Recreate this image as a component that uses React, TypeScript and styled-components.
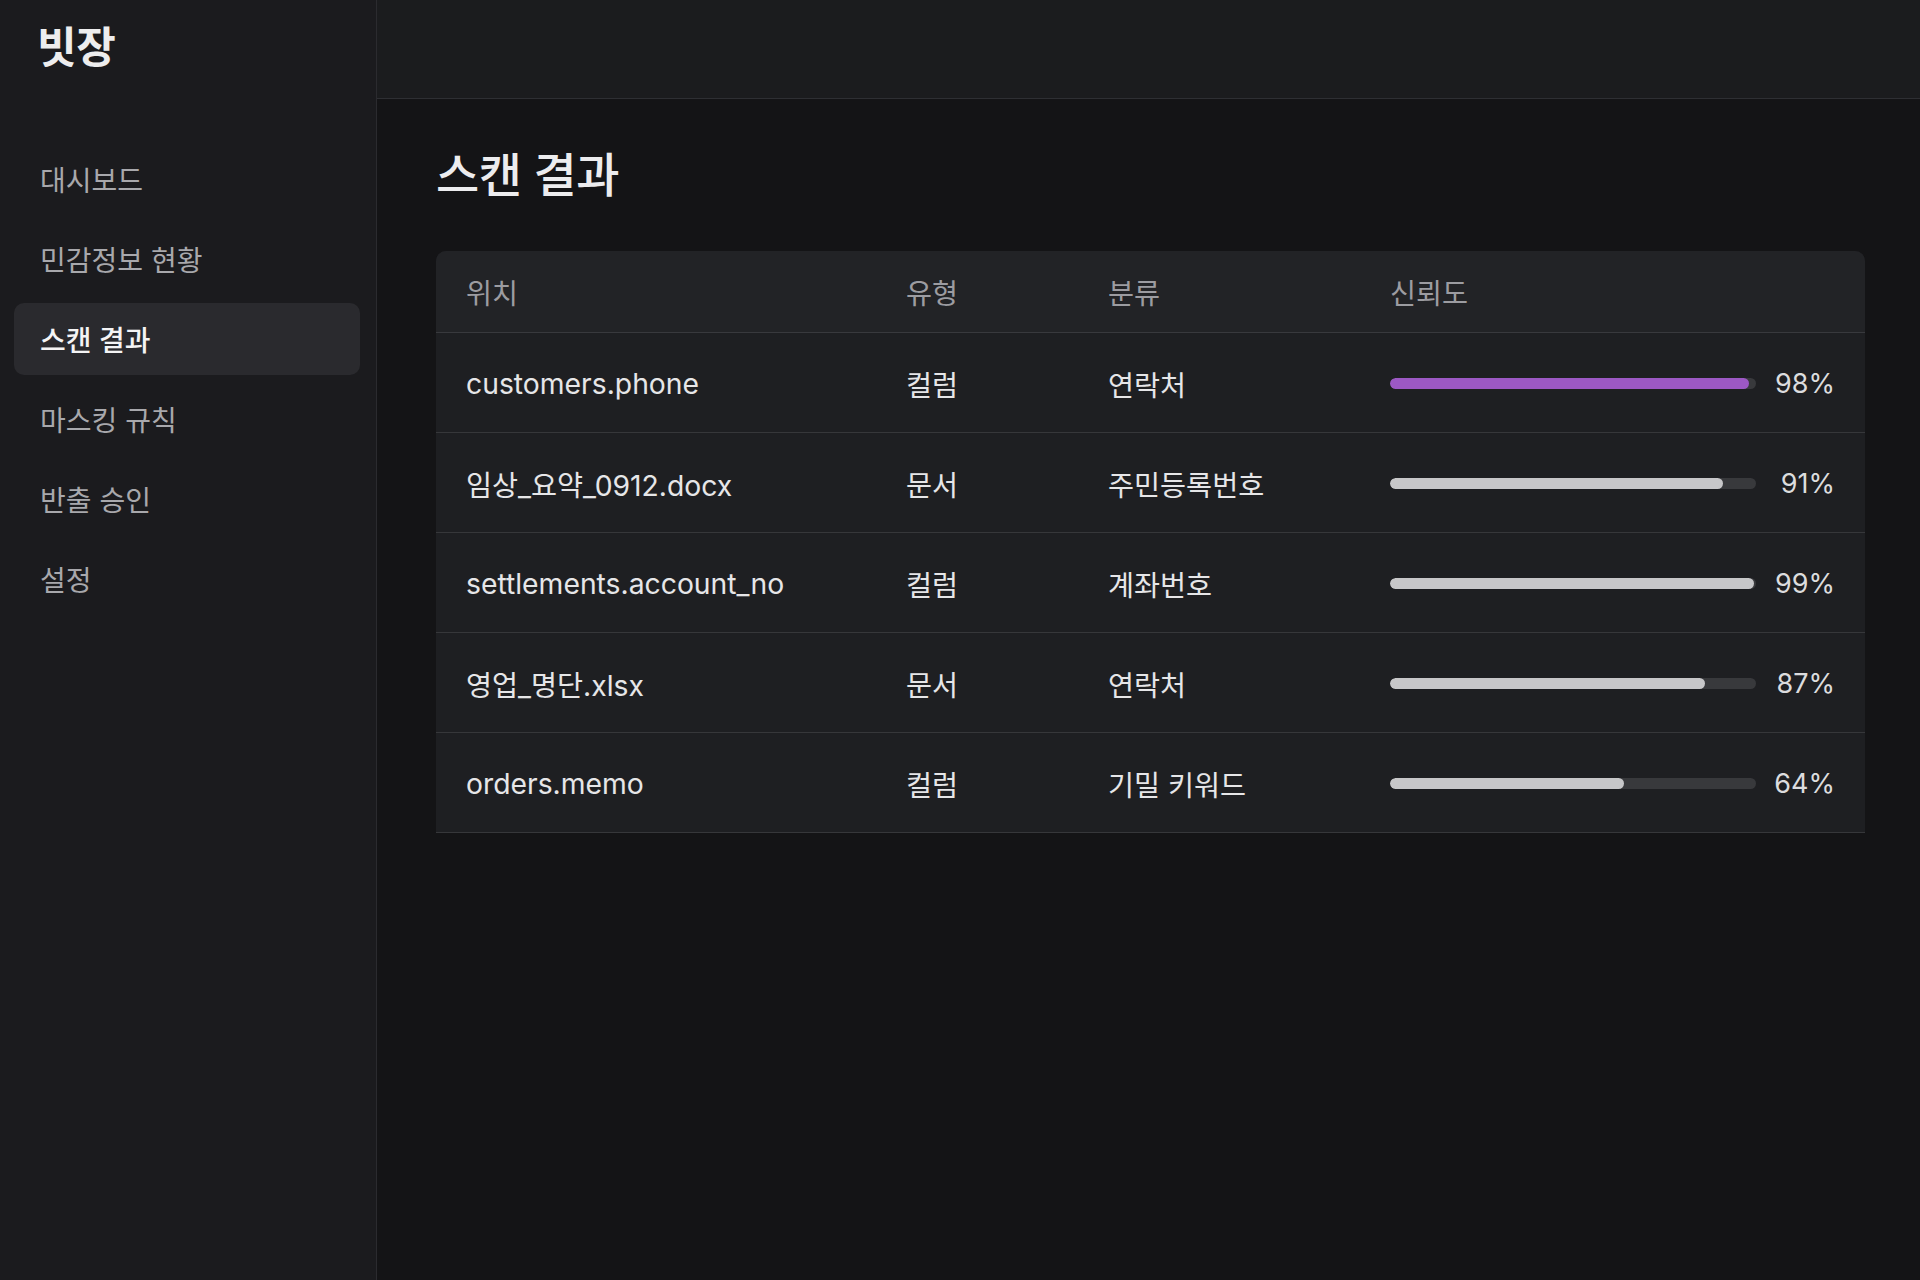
import styled, { createGlobalStyle } from 'styled-components';

const GlobalStyles = createGlobalStyle`
  html, body {
    margin: 0;
    padding: 0;
    background: #141416;
  }
  body {
    font-family: 'Inter', 'Noto Sans CJK KR', sans-serif;
    color: #e8e8ea;
    -webkit-font-smoothing: antialiased;
  }
  * {
    box-sizing: border-box;
  }
`;

const Shell = styled.div`
  display: grid;
  grid-template-columns: 377px 1fr;
  min-height: 100vh;
`;

const Sidebar = styled.aside`
  background: #1b1b1e;
  border-right: 1px solid #2b2b2f;
  padding: 22px 16px 0 14px;
  display: flex;
  flex-direction: column;
`;

const Logo = styled.div`
  margin-left: 23px;
  font-size: 43px;
  line-height: 50px;
  font-weight: 700;
  color: #ededee;
  letter-spacing: -0.01em;
`;

const Nav = styled.nav`
  margin-top: 71px;
  display: flex;
  flex-direction: column;
  gap: 8px;
`;

const NavItem = styled.a<{ $active?: boolean }>`
  display: flex;
  align-items: center;
  height: 72px;
  padding: 0 26px;
  border-radius: 10px;
  font-size: 28px;
  color: ${(p) => (p.$active ? '#f4f4f5' : '#a8a8ac')};
  background: ${(p) => (p.$active ? '#2a2a2e' : 'transparent')};
  font-weight: ${(p) => (p.$active ? 500 : 400)};
  cursor: pointer;
`;

const Main = styled.main`
  display: flex;
  flex-direction: column;
  background: #141416;
`;

const TopBar = styled.header`
  height: 99px;
  flex-shrink: 0;
  background: #1b1c1e;
  border-bottom: 1px solid #2e2f33;
`;

const Content = styled.section`
  padding: 49px 55px 0 59px;
`;

const Title = styled.h1`
  margin: 0;
  font-size: 47px;
  line-height: 54px;
  font-weight: 500;
  color: #ececee;
  letter-spacing: -0.01em;
`;

const Table = styled.div`
  margin-top: 49px;
  background: #1e1f22;
  border-radius: 10px 10px 0 0;
  overflow: hidden;
`;

const Row = styled.div<{ $head?: boolean }>`
  display: grid;
  grid-template-columns: 440px 202px 282px 1fr;
  align-items: center;
  height: ${(p) => (p.$head ? '82px' : '100px')};
  padding: ${(p) => (p.$head ? '0 30px' : '2px 30px 0')};
  border-bottom: 1px solid ${(p) => (p.$head ? '#38393d' : '#36373a')};
  background: ${(p) => (p.$head ? '#222326' : 'transparent')};
  font-size: 28.3px;
  color: ${(p) => (p.$head ? '#9c9ca1' : '#e6e6e8')};
`;

const Cell = styled.div`
  white-space: nowrap;
`;

const Confidence = styled.div`
  display: flex;
  align-items: center;
  gap: 18px;
`;

const Track = styled.div`
  flex: 1;
  height: 11px;
  border-radius: 6px;
  background: #38393c;
  overflow: hidden;
`;

const Fill = styled.div<{ $accent?: boolean }>`
  height: 100%;
  border-radius: 6px;
  background: ${(p) => (p.$accent ? '#9c58c4' : '#c7c7c9')};
`;

const Percent = styled.span`
  min-width: 61px;
  text-align: right;
  font-size: 27px;
  color: #dcdcde;
`;

const navItems = ['대시보드', '민감정보 현황', '스캔 결과', '마스킹 규칙', '반출 승인', '설정'];

const rows = [
  { loc: 'customers.phone', type: '컬럼', cat: '연락처', score: 98, fill: 98, accent: true },
  { loc: '임상_요약_0912.docx', type: '문서', cat: '주민등록번호', score: 91, fill: 91 },
  { loc: 'settlements.account_no', type: '컬럼', cat: '계좌번호', score: 99, fill: 99.5 },
  { loc: '영업_명단.xlsx', type: '문서', cat: '연락처', score: 87, fill: 86 },
  { loc: 'orders.memo', type: '컬럼', cat: '기밀 키워드', score: 64, fill: 64 },
];

export default function App() {
  return (
    <>
      <GlobalStyles />
      <Shell>
        <Sidebar>
          <Logo>빗장</Logo>
          <Nav>
            {navItems.map((item) => (
              <NavItem key={item} $active={item === '스캔 결과'}>
                {item}
              </NavItem>
            ))}
          </Nav>
        </Sidebar>
        <Main>
          <TopBar />
          <Content>
            <Title>스캔 결과</Title>
            <Table>
              <Row $head>
                <Cell>위치</Cell>
                <Cell>유형</Cell>
                <Cell>분류</Cell>
                <Cell>신뢰도</Cell>
              </Row>
              {rows.map((r) => (
                <Row key={r.loc}>
                  <Cell>{r.loc}</Cell>
                  <Cell>{r.type}</Cell>
                  <Cell>{r.cat}</Cell>
                  <Confidence>
                    <Track>
                      <Fill $accent={r.accent} style={{ width: `${r.fill}%` }} />
                    </Track>
                    <Percent>{r.score}%</Percent>
                  </Confidence>
                </Row>
              ))}
            </Table>
          </Content>
        </Main>
      </Shell>
    </>
  );
}
